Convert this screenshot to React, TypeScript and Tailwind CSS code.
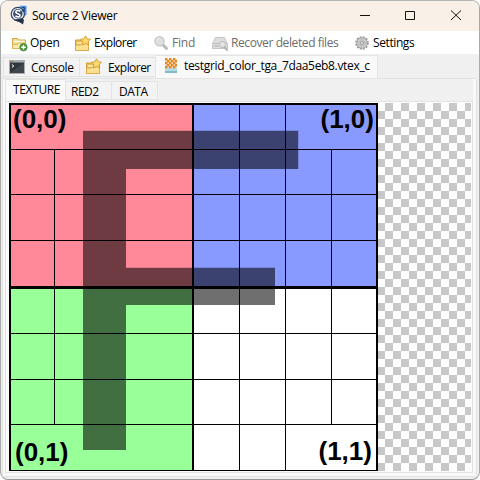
import React from "react";

function AppLogo() {
  return (
    <svg width="18" height="20" viewBox="0 0 18 20">
      <path d="M9.500 .800h7v9l-3 2z" fill="#4a9df8" />
      <circle cx="7.800" cy="9" r="7.200" fill="#34435f" />
      <circle cx="7.800" cy="9" r="6" fill="#e6edf7" />
      <path d="M3.500 15l8.500-2 2 2-1 4.500-3-2z" fill="#26334b" />
      <circle cx="7.800" cy="8.800" r="4.700" fill="#3a4c6b" />
      <path d="M10.300 6.400C9 5 5.800 5.200 5.800 7c0 2 4.200 1.300 4.200 3.400 0 1.800-3.200 1.900-4.600.4" fill="none" stroke="#fff" strokeWidth="1.600" />
      <path d="M12.300 3c.8-1 2.700-.6 2.400.6-.2.800-1.300 1.400-2.300 2.300h2.800" fill="none" stroke="#17396b" strokeWidth="1.100" />
    </svg>
  );
}

function OpenIcon() {
  return (
    <svg width="17" height="16" viewBox="0 0 17 16">
      <path d="M.5 12.500v-10h5l1 1.500h7v8.500z" fill="#f4d987" stroke="#d2a951" />
      <path d="M2 5.500h10.500" stroke="#fff" strokeWidth="1.500" />
      <path d="M.5 12.500v-4h5l1-1.500h7v5.500z" fill="#fbe9ad" stroke="#dab764" />
      <circle cx="11.500" cy="11.300" r="3.700" fill="#4d9a3c" stroke="#397a30" strokeWidth=".6" />
      <path d="M11.500 9v4.600M9.200 11.300h4.600" stroke="#fff" strokeWidth="1.400" />
    </svg>
  );
}

function ExplorerIcon() {
  return (
    <svg width="17" height="17" viewBox="0 0 17 17">
      <path d="M.5 15.500V5h5l1 1.500h7v9z" fill="#eebd55" stroke="#d29b38" />
      <path d="M2 8h10" stroke="#fff4ce" strokeWidth="1.500" />
      <path d="M.5 15.500v-5.500h5l1-1.300h7v6.800z" fill="#fbdf91" stroke="#dbac4b" />
      <path d="M10.500.8l1.500 3 3.500.5-2.500 2.400.6 3.300-3.100-1.600-3.100 1.600.6-3.300-2.500-2.400 3.500-.5z" fill="#ffdc70" stroke="#d49b2c" strokeWidth=".9" />
    </svg>
  );
}

function FindIcon() {
  return (
    <svg width="15" height="15" viewBox="0 0 15 15">
      <path d="M8.500 8.500l4 3.800" stroke="#b8b8b8" strokeWidth="3" strokeLinecap="round" />
      <circle cx="5.500" cy="5.300" r="4.600" fill="#dedede" stroke="#c6c6c6" strokeWidth="1.300" />
      <path d="M3 4.500a3 3 0 013-2" stroke="#eee" fill="none" />
    </svg>
  );
}

function RecoverIcon() {
  return (
    <svg width="17" height="16" viewBox="0 0 17 16">
      <path d="M3.500 1.500h9l3 6.500v4.500h-15V8z" fill="#dddddd" stroke="#c5c5c5" />
      <path d="M1 7.500h14" stroke="#bdbdbd" />
      <path d="M2.500 10h4" stroke="#aaa" />
      <circle cx="10.500" cy="8.500" r="3" fill="#e6e6e6" stroke="#b8b8b8" />
      <path d="M12.500 11l2.500 3" stroke="#b5b5b5" strokeWidth="2" strokeLinecap="round" />
    </svg>
  );
}

function SettingsIcon() {
  return (
    <svg width="14" height="14" viewBox="0 0 14 14">
      <circle cx="7" cy="7" r="5.900" fill="none" stroke="#9a9a9a" strokeWidth="1.800" strokeDasharray="2 1.090" />
      <circle cx="7" cy="7" r="5.200" fill="#cfcfcf" stroke="#a3a3a3" strokeWidth=".8" />
      <circle cx="7" cy="7" r="3.200" fill="none" stroke="#aaa" strokeDasharray="1.500 1" />
      <circle cx="7" cy="7" r="1.500" fill="#eee" stroke="#888" strokeWidth=".8" />
    </svg>
  );
}

function ConsoleIcon() {
  return (
    <svg width="16" height="14" viewBox="0 0 16 14">
      <path d="M0 0h16v14H0z" fill="#a9adb0" />
      <path d="M1 2.500h14V13H1z" fill="#30363b" />
      <path d="M1 13L15 2.500V13z" fill="#41474c" />
      <path d="M1 1h1.500v1H1z" fill="#d55" />
      <path d="M3 1h1.500v1H3z" fill="#4a4" />
      <path d="M2.800 4.500l2 1.500-2 1.500" stroke="#fff" fill="none" />
    </svg>
  );
}

const orangeCells = [
  [0, 0], [4, 0], [2, 2], [6, 2], [8, 0], [0, 4], [4, 4], [8, 4], [2, 6], [6, 6], [10, 2], [10, 6], [4, 8], [8, 8], [0, 8],
];

function TextureIcon() {
  return (
    <svg width="12" height="15" viewBox="0 0 12 15">
      <path d="M0 1h12v14H0z" fill="#b5dce2" />
      <path d="M0 13h12v2H0z" fill="#82bac6" />
      <path d="M0 1h12v8H0z" fill="#efd9b5" />
      {orangeCells.map(([x, y]) => (
        <rect key={`${x}-${y}`} x={x} y={y} width="2.300" height="2.300" fill="#e88622" />
      ))}
    </svg>
  );
}

function TestGrid() {
  return (
    <svg width="369" height="368" viewBox="9 103 369 368" shapeRendering="crispEdges" className="block">
      <rect x="9" y="103" width="184" height="184" fill="#ff8899" />
      <rect x="193" y="103" width="185" height="184" fill="#8899ff" />
      <rect x="9" y="287" width="184" height="184" fill="#99ff99" />
      <rect x="193" y="287" width="185" height="184" fill="#fff" />
      <path d="M83 131H298V169H126V268H275V305H126V450H83Z" fill="#000" fillOpacity=".565" />
      <path d="M83 130.500H298M298.500 130V169M126 267.500H275" stroke="#000" strokeOpacity=".12" />
      <g fill="#000">
        <path d="M9 103h369v2H9zM9 103h2v368H9zM376 103h2v368h-2zM9 470h369v1H9z" />
        <path d="M192 103h2v368h-2zM9 286h369v3H9z" />
        <path d="M9 149h369v1H9zM9 194h369v1H9zM9 240h369v1H9zM9 333h369v1H9zM9 379h369v1H9zM9 424h369v1H9z" />
        <path d="M54 149h1v276h-1zM239 103h1v368h-1zM285 103h1v368h-1zM331 149h1v276h-1z" />
      </g>
      <g className="font-['Liberation_Sans',Arial,sans-serif] text-[26px] font-bold" fill="#000">
        <text x="13" y="127.500">(0,0)</text>
        <text x="320.500" y="128">(1,0)</text>
        <text x="15" y="461">(0,1)</text>
        <text x="318.500" y="460">(1,1)</text>
      </g>
    </svg>
  );
}

export default function App() {
  return (
    <div className="h-[480px] w-[480px] overflow-hidden bg-white font-['Open_Sans','Noto_Sans',sans-serif] text-[12px] leading-4 whitespace-nowrap text-black">
      <div className="flex h-[480px] w-[480px] flex-col overflow-hidden rounded-[8px] border border-t-[#b5b5b8] border-r-[#aaa] border-b-[#999] border-l-[#aaa] bg-[#f0f0f0]">
        <header className="flex h-[30px] shrink-0 bg-[#f9f1e7]">
          <div className="w-[31px] pt-[4px] pl-[9px]"><AppLogo /></div>
          <div className="w-[359px] pt-[7px] tracking-[-0.28px]">Source 2 Viewer</div>
          <svg width="88" height="30" viewBox="391 1 88 30" fill="none" stroke="#111" className="shrink-0 overflow-visible">
            <path d="M360 15.500h10M405.500 11.500h9v8h-9zM451 10.500l10 9.500M461 10.500l-10 9.500" />
          </svg>
        </header>

        <nav className="flex h-[23px] shrink-0 bg-white pt-[4px]">
          <div className="flex w-[62px] pl-[11px]"><div className="w-[18px] pt-px"><OpenIcon /></div><span className="tracking-[-0.3px]">Open</span></div>
          <div className="flex w-[79px] pl-[12px]"><div className="w-[19px]"><ExplorerIcon /></div><span className="tracking-[-0.55px]">Explorer</span></div>
          <div className="flex w-[58px] pl-[12px] text-[#6d6d6d]"><div className="w-[18px] pt-px"><FindIcon /></div><span className="tracking-[-0.2px]">Find</span></div>
          <div className="flex w-[144px] pl-[12px] text-[#6d6d6d]"><div className="w-[19px] pt-px"><RecoverIcon /></div><span className="tracking-[-0.4px]">Recover deleted files</span></div>
          <div className="flex pl-[11px]"><div className="w-[18px] pt-px"><SettingsIcon /></div><span className="tracking-[-0.4px]">Settings</span></div>
        </nav>

        <div className="flex h-[24px] shrink-0 items-end bg-[#f0f0f0] pl-[2px]">
          <div className="mb-px flex h-[20px] w-[77px] border border-[#e3e3e3] bg-[#f3f3f3] pt-[2px] pl-[5px]"><div className="w-[22px]"><ConsoleIcon /></div><span className="tracking-[-0.3px]">Console</span></div>
          <div className="mb-px flex h-[20px] w-[76px] border border-l-0 border-[#e3e3e3] bg-[#f3f3f3] pt-[2px] pl-[6px]"><div className="-mt-[2px] w-[22px]"><ExplorerIcon /></div><span className="tracking-[-0.55px]">Explorer</span></div>
          <div className="flex h-[23px] w-[222px] border border-b-0 border-l-0 border-[#e3e3e3] bg-[#f9f9f9] pt-[2px] pl-[9px]"><div className="w-[19px]"><TextureIcon /></div><span className="tracking-[-0.33px]">testgrid_color_tga_7daa5eb8.vtex_c</span></div>
        </div>

        <main className="mr-[2px] ml-px flex h-[399px] shrink-0 flex-col border border-[#e3e3e3] bg-[#f9f9f9] pr-[3px] pl-[2px]">
          <div className="flex h-[22px] shrink-0 items-end bg-[#f0f0f0]">
            <div className="h-[22px] w-[61px] border border-b-0 border-[#e3e3e3] bg-[#f9f9f9] pt-[2px] pl-[7px] tracking-[-0.35px]">TEXTURE</div>
            <div className="mb-px h-[19px] w-[46px] border border-l-0 border-[#e3e3e3] bg-[#f3f3f3] pt-[2px] pl-[5px] tracking-[-0.5px]">RED2</div>
            <div className="mb-px h-[19px] w-[46px] border border-l-0 border-[#e3e3e3] bg-[#f3f3f3] pt-[2px] pl-[7px] tracking-[-0.5px]">DATA</div>
          </div>
          <section className="h-[372px] w-[468px] shrink-0 border border-[#e3e3e3] bg-[#fcfcfc] pt-px pl-[3px]">
            <div className="h-[368px] w-[462px] bg-[conic-gradient(#c8c8c8_25%,#fff_0_50%,#c8c8c8_0_75%,#fff_0)] bg-[length:16px_16px]">
              <TestGrid />
            </div>
          </section>
        </main>
      </div>
    </div>
  );
}
